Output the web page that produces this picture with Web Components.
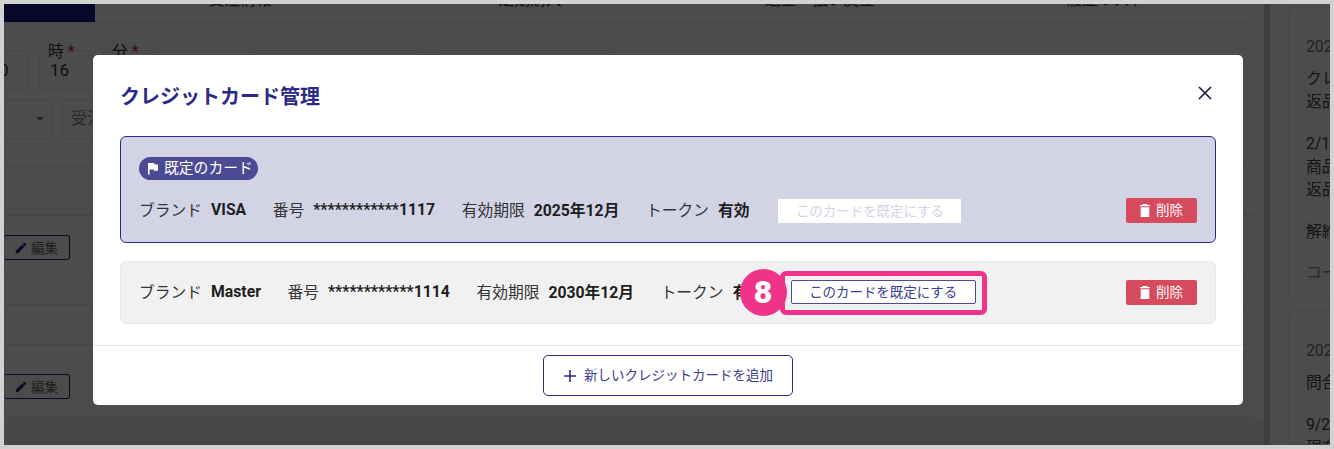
<!DOCTYPE html>
<html lang="ja">
<head>
<meta charset="utf-8">
<style>
html, body { margin:0; height:100%; }
body {
  background:#d2d2d2; padding:4px; box-sizing:border-box; overflow:hidden;
  font-family:Roboto,"Noto Sans CJK JP",sans-serif; color:#222;
}
</style>
</head>
<body>
<app-screen>
  <back-page slot="page"></back-page>
  <credit-dialog slot="dialog">
    <card-row default>
      <span slot="badge">既定のカード</span>
      <pair-item label="ブランド" value="VISA"></pair-item>
      <pair-item label="番号" value="************1117"></pair-item>
      <pair-item label="有効期限" value="2025年12月"></pair-item>
      <pair-item label="トークン" value="有効"></pair-item>
      <set-button slot="action" disabled>このカードを既定にする</set-button>
    </card-row>
    <card-row>
      <pair-item label="ブランド" value="Master"></pair-item>
      <pair-item label="番号" value="************1114"></pair-item>
      <pair-item label="有効期限" value="2030年12月"></pair-item>
      <pair-item label="トークン" value="有効"></pair-item>
      <step-callout slot="action" step="8"><set-button>このカードを既定にする</set-button></step-callout>
    </card-row>
  </credit-dialog>
</app-screen>

<script>
// outer window: page, dim layer, dialog
class AppScreen extends HTMLElement {
  constructor(){
    super();
    this.attachShadow({mode:'open'}).innerHTML = `
<style>
:host { display:block; position:relative; width:1326px; height:441px; overflow:hidden; }
.dim { position:absolute; inset:0; background:rgba(0,0,0,.7); padding:51px 0 0 89px; }
</style>
<slot name="page"></slot>
<div class="dim"><slot name="dialog"></slot></div>`;
  }
}
customElements.define('app-screen', AppScreen);

// the page behind the dialog
class BackPage extends HTMLElement {
  constructor(){
    super();
    const edit = `<span class="edit"><svg width="14" height="14" viewBox="0 0 24 24"><path fill="#1a1a80" d="M3 17.25V21h3.75L17.81 9.94l-3.75-3.75zM20.71 7.04a1 1 0 0 0 0-1.41l-2.34-2.34a1 1 0 0 0-1.41 0l-1.83 1.83 3.75 3.75z"/></svg><span class="et">編集</span></span>`;
    this.attachShadow({mode:'open'}).innerHTML = `
<style>
:host { display:flex; height:441px; background:#fdfdfd; font-size:15.75px; color:#333; }
.main { width:1260px; flex:none; display:flex; flex-direction:column; }
.tabs { display:flex; height:18px; border-bottom:1px solid #e6e6e6; position:relative; margin-right:10px; }
.tab { width:91px; background:#1a1a8c; }
.tabs span { position:absolute; top:-15px; width:190px; text-align:center; line-height:22px; }
.fields { display:flex; gap:10px; margin:27px 0 0 -32px; height:40px; }
.fld { border:1px solid #e8e8e8; border-radius:5px; background:#fff; box-sizing:border-box; height:40px; position:relative; font-size:16px; }
.fld b { position:absolute; left:8px; top:-9px; font-weight:400; font-size:15.75px; line-height:20px; white-space:nowrap; }
.fld b i { color:#c33; font-style:normal; }
.fld em { position:absolute; left:10px; top:9px; font-style:normal; line-height:20px; font-size:17px; }
.second { display:flex; gap:10px; margin:9px 0 0 -40px; height:40px; }
.second .fld { color:#888; }
.caret { position:absolute; right:7px; top:17px; border:4px solid transparent; border-top-color:#777; border-bottom:0; }
.rule { border-bottom:1px solid #e6e6e6; margin-right:10px; }
.block { background:#fff; border:1px solid #ebebeb; border-radius:5px; margin-right:10px; height:64px; display:flex; align-items:center; box-sizing:border-box; }
.edit { display:inline-flex; align-items:center; gap:3px; width:66px; height:25px; box-sizing:border-box; border:1px solid #1a1a80; border-radius:3px; border-left:0; font-size:13.5px; color:#666; padding-left:10px; margin:1px 0 0 -1px; }
.et { padding-bottom:2px; }
.sep { width:6px; flex:none; background:#d0d0d0; }
.side { flex:1; padding:3px 0 0 18px; display:flex; flex-direction:column; gap:9px; overflow:hidden; min-width:0; }
.note { background:#fff; border:1px solid #ebebeb; border-right:0; border-radius:6px 0 0 6px; padding:27px 0 0 17px; white-space:nowrap; font-size:15.75px; line-height:23px; color:#444; overflow:hidden; }
.note p { margin:0; }
</style>
<div class="main">
  <div class="tabs"><div class="tab"></div><span style="left:141px">受注情報</span><span style="left:431px">定期購入</span><span style="left:721px">返金・払い戻金</span><span style="left:1007px">履歴リスト</span></div>
  <div class="fields">
    <div class="fld" style="width:57px"><em style="left:26px">0</em></div>
    <div class="fld" style="width:54px"><b>時 <i>*</i></b><em>16</em></div>
    <div class="fld" style="width:56px"><b>分 <i>*</i></b></div>
    <div class="fld" style="width:178px;margin-left:79px"></div>
    <div class="fld" style="width:180px"></div>
  </div>
  <div class="second">
    <div class="fld" style="width:88px"><span class="caret"></span></div>
    <div class="fld" style="width:300px"><em style="left:8px;font-size:16px">受注</em></div>
  </div>
  <div class="rule" style="height:27px"></div>
  <div class="rule" style="height:47px"></div>
  <div class="block">${edit}</div>
  <div class="rule" style="height:25px"></div>
  <div class="rule" style="height:39px"></div>
  <div class="block" style="margin-top:9px">${edit}</div>
  <div style="flex:1;background:#f0f0f0"></div>
</div>
<div class="sep"></div>
<div class="side">
  <div class="note" style="height:295px;box-sizing:border-box;flex:none">
    <p style="color:#777;margin-bottom:9px">2024</p>
    <p>クレジット</p><p>返品</p>
    <p style="margin-top:19px">2/1</p><p>商品</p><p>返品</p>
    <p style="margin-top:19px">解約</p>
    <p style="margin-top:18px;color:#888">コード</p>
  </div>
  <div class="note" style="flex:1">
    <p style="color:#777;margin-bottom:9px">2024</p>
    <p>問合</p>
    <p style="margin-top:19px">9/2</p><p>現在</p>
  </div>
</div>`;
  }
}
customElements.define('back-page', BackPage);

// dialog shell: title, close, list, footer
class CreditDialog extends HTMLElement {
  constructor(){
    super();
    this.attachShadow({mode:'open'}).innerHTML = `
<style>
:host { display:flex; flex-direction:column; width:1150px; height:350px; background:#fff; border-radius:5px; box-sizing:border-box; }
header { display:flex; justify-content:space-between; align-items:flex-start; padding:28px 31px 0 27px; height:27px; }
h1 { margin:0; font-size:20px; font-weight:700; color:#2a2a86; line-height:29px; }
header svg { margin-top:3px; }
.list { display:flex; flex-direction:column; gap:18px; padding:26px 27px 0; }
footer { margin-top:21px; border-top:1px solid #e6e6e6; flex:1; display:flex; justify-content:center; padding-top:9px; }
.add { display:flex; align-items:center; justify-content:center; gap:7px; box-sizing:border-box; width:250px; height:41px; border:1px solid #2a2a86; border-radius:5px; color:#3c3c90; font-size:13.5px; background:#fff; }
.add span { padding-bottom:3px; }
</style>
<header>
  <h1>クレジットカード管理</h1>
  <svg width="14" height="14" viewBox="0 0 14 14"><path d="M1 1l12 12M13 1L1 13" stroke="#14143c" stroke-width="1.6" fill="none"/></svg>
</header>
<div class="list"><slot></slot></div>
<footer><div class="add"><svg width="14" height="14" viewBox="0 0 14 14"><path d="M7 1v12M1 7h12" stroke="#2a2a86" stroke-width="1.6"/></svg><span>新しいクレジットカードを追加</span></div></footer>`;
  }
}
customElements.define('credit-dialog', CreditDialog);

// one saved card
class CardRow extends HTMLElement {
  constructor(){
    super();
    const isDefault = this.hasAttribute('default');
    this.attachShadow({mode:'open'}).innerHTML = `
<style>
:host { display:block; box-sizing:border-box; border-radius:6px; padding:0 18px; }
:host([default]) { height:107px; background:#d3d3e6; border:1px solid #2a2a86; padding-top:20px; }
:host(:not([default])) { height:63px; background:#f1f1f1; border:1px solid #e8e8e8; padding-top:18px; }
.badge { display:inline-flex; align-items:center; gap:5px; height:23px; box-sizing:border-box; padding:0 5px 0 8px; border-radius:12px; background:#4b4b94; color:#fff; font-size:14.8px; margin-bottom:18px; }
.badge ::slotted(span) { padding-bottom:4px; }
.row { display:flex; align-items:center; height:25px; }
.items { display:flex; gap:26.5px; margin-top:-3px; }
.action { margin-left:29px; }
:host([default]) .action { align-self:flex-end; }
:host(:not([default])) .action { align-self:flex-start; margin-left:26.5px; }
.del { margin-left:auto; display:flex; align-items:center; justify-content:center; gap:6px; width:71px; height:25px; border-radius:2px; background:#d64a5e; color:#fff; font-size:13.5px; }
.del span { padding-bottom:3px; }
</style>
${isDefault ? `<div class="badge"><svg width="12" height="13" viewBox="0 0 12 13"><path fill="#fff" d="M1 1h6.2l.4 1.4H11v6.4H7l-.4-1.4H2.6V12.6H1z"/></svg><slot name="badge"></slot></div>` : ''}
<div class="row">
  <div class="items"><slot></slot></div>
  <div class="action"><slot name="action"></slot></div>
  <div class="del"><svg width="10" height="13" viewBox="0 0 10 13"><path fill="#fff" d="M3 0h4l.8.9H10v1.4H0V.9h2.2zM.7 3.3h8.6V13H.7z"/></svg><span>削除</span></div>
</div>`;
  }
}
customElements.define('card-row', CardRow);

class PairItem extends HTMLElement {
  constructor(){
    super();
    this.attachShadow({mode:'open'}).innerHTML = `
<style>
:host { display:inline-flex; gap:9px; align-items:center; font-size:15.75px; color:#333; white-space:nowrap; }
b { color:#1e1e1e; font-weight:700; }
</style>
<span>${this.getAttribute('label')}</span><b>${this.getAttribute('value')}</b>`;
  }
}
customElements.define('pair-item', PairItem);

class SetButton extends HTMLElement {
  constructor(){
    super();
    this.attachShadow({mode:'open'}).innerHTML = `
<style>
:host { display:flex; align-items:center; justify-content:center; width:185px; height:24px; box-sizing:border-box; background:#fff; border:1px solid #4b4b94; border-radius:2px; color:#3c3c90; font-size:13.45px; white-space:nowrap; padding-bottom:3px; }
:host([disabled]) { width:183px; border-color:#fff; border-radius:0; color:#d3d3e6; }
</style>
<slot></slot>`;
  }
}
customElements.define('set-button', SetButton);

// pink ring and numbered circle drawn over the target control
class StepCallout extends HTMLElement {
  constructor(){
    super();
    this.attachShadow({mode:'open'}).innerHTML = `
<style>
:host { display:block; position:relative; }
.ring { position:absolute; inset:-9px -11px -11px -11px; border:5px solid #ee3388; border-radius:6px; }
.num { position:absolute; left:-51px; top:-11px; width:47px; height:47px; border-radius:50%; background:#ee3388; color:#fff; font:900 32px/47px Roboto,sans-serif; text-align:center; }
</style>
<slot></slot><div class="ring"></div><div class="num">${this.getAttribute('step')}</div>`;
  }
}
customElements.define('step-callout', StepCallout);
</script>
</body>
</html>
